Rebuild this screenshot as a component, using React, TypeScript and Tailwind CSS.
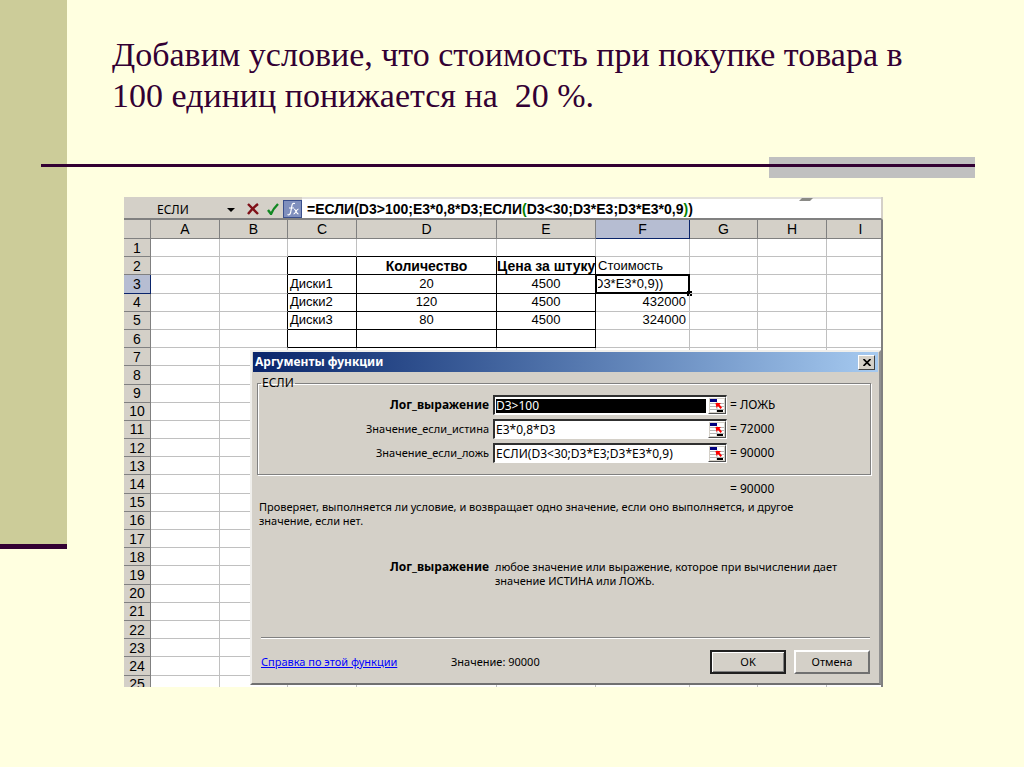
import type { ReactNode } from "react";

const columns = [
    { name: "A", width: "w-[69px]" },
    { name: "B", width: "w-[68px]" },
    { name: "C", width: "w-[69px]" },
    { name: "D", width: "w-[140px]" },
    { name: "E", width: "w-[99px]" },
    { name: "F", width: "w-[94px]" },
    { name: "G", width: "w-[68px]" },
    { name: "H", width: "w-[69px]" },
    { name: "I", width: "" },
];

const rows = Array.from({ length: 25 }, (_, i) => i + 1);

const cells: Record<string, string> = {
    D2: "Количество",
    E2: "Цена за штуку",
    F2: "Стоимость",
    C3: "Диски1",
    D3: "20",
    E3: "4500",
    F3: "D3*E3*0,9))",
    C4: "Диски2",
    D4: "120",
    E4: "4500",
    F4: "432000",
    C5: "Диски3",
    D5: "80",
    E5: "4500",
    F5: "324000",
};

const args = [
    { id: "test", label: "Лог_выражение", value: "D3>100", result: "ЛОЖЬ" },
    { id: "yes", label: "Значение_если_истина", value: "E3*0,8*D3", result: "72000" },
    { id: "no", label: "Значение_если_ложь", value: "ЕСЛИ(D3<30;D3*E3;D3*E3*0,9)", result: "90000" },
];

// Black frame around C2:E6, light grid everywhere else
function cellBorder(col: string, row: number) {
    const right = row >= 2 && row <= 6 && "BCDE".includes(col);
    const bottom = row >= 1 && row <= 6 && "CDE".includes(col);
    return `${right ? "border-r-black" : "border-r-[#c0c0c0]"} ${bottom ? "border-b-black" : "border-b-[#c0c0c0]"}`;
}

function cellAlign(col: string, row: number) {
    if (col === "D" || col === "E") return row === 2 ? "text-center text-[14px] font-bold" : "text-center";
    if (col === "F" && row > 3) return "text-right pr-[3px]";
    return "text-left pl-[2px]";
}

function FormulaBar() {
    return (
        <div className="relative flex h-[23px] items-stretch border-r-2 border-b-2 border-r-[#d4d0c8] border-b-[#808080] bg-[#d4d0c8]">
            <div className="flex w-[117px] items-center justify-between pt-1 pl-[33px] text-[12px] text-black">
                <span className="font-['Noto_Sans',sans-serif]">ЕСЛИ</span>
                <button type="button" aria-label="Список функций" className="mr-[2px] flex h-4 w-4 items-center justify-center">
                    <svg viewBox="0 0 8 4" className="h-1 w-2">
                        <path d="M0 0h8L4 4z" fill="#000" />
                    </svg>
                </button>
            </div>
            <div className="flex w-[61px] items-center justify-end pt-[3px]">
                <button type="button" aria-label="Отмена ввода" className="flex w-5 justify-center">
                    <svg viewBox="0 0 12 12" className="h-3 w-3">
                        <path d="M1 1c3 3 6 6 10 10M11 1C7 4 4 7 1 11" fill="none" stroke="#7f1018" strokeWidth="2.4" />
                    </svg>
                </button>
                <button type="button" aria-label="Ввод" className="flex w-5 justify-center">
                    <svg viewBox="0 0 12 12" className="h-3 w-3">
                        <path d="M1 7l3 4C6 6 8 4 11 1" fill="none" stroke="#118822" strokeWidth="2.4" />
                    </svg>
                </button>
                <button type="button" aria-label="Вставить функцию" className="flex h-[18px] w-[19px] items-center justify-center border border-[#3a4f8c] bg-[#7f8fbd]">
                    <svg viewBox="0 0 14 14" className="h-[14px] w-[14px]">
                        <path d="M9 1.500C6 .5 6 3 5.500 6L4.500 11c-.5 2-2 2-3 1.500M3 6h5M8 7c2 0 2 5 4.500 5M12.500 7c-2 0-3 5-5 5" fill="none" stroke="#fff" strokeWidth="1.2" />
                    </svg>
                </button>
            </div>
            <div
                role="textbox"
                aria-label="Строка формул"
                contentEditable
                suppressContentEditableWarning
                className="min-w-0 flex-1 whitespace-nowrap border-t-2 border-[#e4e2dc] bg-white pl-[5px] text-[14px] leading-5 font-bold text-black outline-none"
            >
                =ЕСЛИ(D3&gt;100;E3*0,8*D3;ЕСЛИ<span className="text-[#008000]">(</span>D3&lt;30;D3*E3;D3*E3*0,9<span className="text-[#008000]">)</span>)
            </div>
            <svg viewBox="0 0 14 3" className="absolute top-px right-[68px] h-[3px] w-[14px]">
                <path d="M3 0h11l-3 3H0z" fill="#8a8a86" />
            </svg>
        </div>
    );
}

function Grid() {
    return (
        <div className="overflow-hidden border-r-2 border-[#808080]">
            <table className="h-[474px] w-[calc(100%+14px)] table-fixed border-separate border-spacing-0 bg-white text-[13px] leading-4 text-black">
                <colgroup>
                    <col className="w-[27px]" />
                    {columns.map((c) => (
                        <col key={c.name} className={c.width} />
                    ))}
                </colgroup>
                <thead>
                    <tr>
                        <th className="border-r border-b border-[#808080] bg-[#d4d0c8]" />
                        {columns.map((c) => (
                            <th
                                key={c.name}
                                scope="col"
                                className={`h-[19px] border-r border-b p-0 text-[14px] font-normal ${c.name === "F" ? "border-[#0a246a] bg-[#b6bdd2]" : "border-[#808080] bg-[#d4d0c8]"}`}
                            >
                                {c.name}
                            </th>
                        ))}
                    </tr>
                </thead>
                <tbody>
                    {rows.map((r) => (
                        <tr key={r}>
                            <th
                                scope="row"
                                className={`h-[18px] border-r border-b p-0 text-[14px] font-normal ${r === 3 ? "border-[#0a246a] bg-[#b6bdd2]" : "border-[#808080] bg-[#d4d0c8]"}`}
                            >
                                {r}
                            </th>
                            {columns.map((c) => (
                                <td
                                    key={c.name}
                                    className={`relative h-[18px] border-r border-b p-0 ${cellBorder(c.name, r)} ${cellAlign(c.name, r)}`}
                                >
                                    {c.name === "F" && r === 3 ? (
                                        <>
                                            <div className="overflow-hidden">
                                                <span className="-ml-1">{cells.F3}</span>
                                            </div>
                                            <div className="absolute -inset-px border-2 border-black" />
                                            <div className="absolute -right-[3px] -bottom-[3px] h-[5px] w-[5px] bg-black" />
                                        </>
                                    ) : (
                                        <div className="whitespace-nowrap">{cells[c.name + r]}</div>
                                    )}
                                </td>
                            ))}
                        </tr>
                    ))}
                </tbody>
            </table>
        </div>
    );
}

function RangeIcon() {
    return (
        <svg viewBox="0 0 14 13" className="h-[13px] w-[14px]">
            <rect width="14" height="13" fill="#fff" />
            <path d="M0 4.500h14M0 7.500h14M0 10.500h14M7 3v10" stroke="#b8b8b8" />
            <rect width="7" height="3" fill="#000080" />
            <rect x="7" y="11" width="6" height="2" fill="#000" />
            <path d="M5.500 4H11L9.500 5.500l2.500 3L10.500 10 8 7 6.500 9z" fill="#f00" />
        </svg>
    );
}

function DialogButton({ children, primary = false }: { children: ReactNode; primary?: boolean }) {
    return (
        <button
            type="button"
            className={`h-6 w-[76px] bg-[#d4d0c8] text-center ${primary ? "border-2 border-[#202020] shadow-[inset_1px_1px_#fff,inset_-1px_-1px_#808080]" : "border-2 border-t-white border-r-[#707070] border-b-[#707070] border-l-white"}`}
        >
            {children}
        </button>
    );
}

function ArgumentsDialog() {
    return (
        <section
            role="dialog"
            aria-labelledby="dialog-title"
            className="absolute top-[153px] right-[2px] bottom-[2px] left-[126px] flex flex-col border-2 border-t-[#f0efec] border-r-[#909090] border-b-[#707070] border-l-[#f0efec] bg-[#d4d0c8] font-['Noto_Sans',sans-serif] text-[11px] leading-[14px] text-black"
        >
            <header className="mr-px ml-px flex h-5 items-center justify-between bg-linear-to-r from-[#0a246a] to-[#a6caf0] pr-[3px] pl-[2px]">
                <h2 id="dialog-title" className="text-[12px] font-bold text-white">Аргументы функции</h2>
                <button type="button" aria-label="Закрыть" className="flex h-[15px] w-[17px] items-center justify-center border border-t-white border-r-[#404040] border-b-[#404040] border-l-white bg-[#d4d0c8]">
                    <svg viewBox="0 0 8 7" className="h-[7px] w-2">
                        <path d="M.5 0l7 7M7.500 0l-7 7" stroke="#000" strokeWidth="1.7" />
                    </svg>
                </button>
            </header>

            <fieldset className="mt-1 mr-2 ml-[5px] border border-[#808080] pb-[11px] shadow-[1px_1px_#fff,inset_1px_1px_#fff]">
                <legend className="ml-[3px] px-px text-[12px]">ЕСЛИ</legend>
                <div className="mt-[5px] space-y-1">
                    {args.map((a, i) => (
                        <div key={a.id} className="flex items-center">
                            <label htmlFor={a.id} className={`w-[231px] text-right ${i === 0 ? "text-[12px] font-bold" : ""}`}>
                                {a.label}
                            </label>
                            <div className="ml-1 flex h-5 w-[234px] items-center border-t-2 border-r border-b border-l-2 border-t-[#303030] border-r-white border-b-white border-l-[#303030] bg-white pl-px">
                                <input
                                    id={a.id}
                                    defaultValue={a.value}
                                    className={`h-[14px] min-w-0 flex-1 text-[12px] outline-none ${i === 0 ? "bg-black text-white" : "bg-white"}`}
                                />
                                <button type="button" aria-label="Выбрать диапазон" className="ml-[2px] flex h-[17px] w-[18px] items-center justify-center border border-t-white border-r-[#505050] border-b-[#505050] border-l-white bg-[#d4d0c8]">
                                    <RangeIcon />
                                </button>
                            </div>
                            <output htmlFor={a.id} className="ml-[3px] text-[12px]">= {a.result}</output>
                        </div>
                    ))}
                </div>
            </fieldset>

            <p className="mt-[7px] pl-[478px] text-[12px]">= 90000</p>
            <p className="mt-1 mr-10 ml-[7px]">
                Проверяет, выполняется ли условие, и возвращает одно значение, если оно выполняется, и другое значение, если нет.
            </p>
            <dl className="mt-8 flex">
                <dt className="w-[237px] text-right text-[12px] font-bold">Лог_выражение</dt>
                <dd className="mr-7 ml-[6px] flex-1">
                    любое значение или выражение, которое при вычислении дает значение ИСТИНА или ЛОЖЬ.
                </dd>
            </dl>

            <footer className="mt-auto mr-[9px] ml-[9px] flex items-center border-t border-[#808080] pt-3 pb-[9px] shadow-[inset_0_1px_#fff]">
                <a href="#help" className="w-[190px] text-[#0000ff] underline">Справка по этой функции</a>
                <span>Значение: 90000</span>
                <div className="ml-auto flex gap-2">
                    <DialogButton primary>OK</DialogButton>
                    <DialogButton>Отмена</DialogButton>
                </div>
            </footer>
        </section>
    );
}

export default function App() {
    return (
        <div className="flex min-h-screen bg-[#ffffe0]">
            <aside className="h-[549px] w-[67px] shrink-0 border-b-[5px] border-[#330033] bg-[#cccc99]" />
            <main className="min-w-0 flex-1 pt-[34px]">
                <h1 className="mr-[90px] ml-[45px] font-['Liberation_Serif',serif] text-[34px] leading-[41px] whitespace-pre-wrap text-[#330033]">
                    {"Добавим условие, что стоимость при покупке товара в 100 единиц понижается на  20 %."}
                </h1>

                {/* Divider with the grey tab on its right end */}
                <div className="relative mt-[41px] mr-[49px] -ml-[26px] h-[21px]">
                    <div className="ml-auto h-full w-[206px] bg-[#c0c0c0]" />
                    <hr className="absolute inset-x-0 top-[7px] h-[3px] border-0 bg-[#330033]" />
                </div>

                <div className="relative mt-[19px] mr-[141px] ml-[57px] h-[490px] overflow-hidden font-['Liberation_Sans',sans-serif]">
                    <FormulaBar />
                    <Grid />
                    <ArgumentsDialog />
                </div>
            </main>
        </div>
    );
}
